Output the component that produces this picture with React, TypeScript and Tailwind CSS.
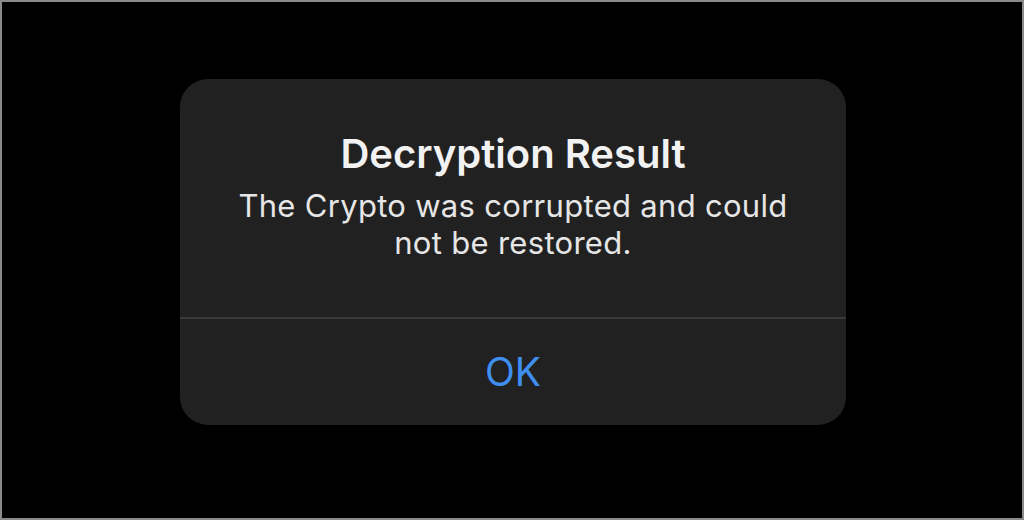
export default function App() {
    return (
        <div
            className="w-[1024px] h-[520px] bg-black border-2 border-[#8a8a8a] flex justify-center items-start pt-[77px] pl-[2px]"
            style={{ fontFamily: 'Inter, "Noto Sans", sans-serif' }}
        >
            <div className="w-[666px] h-[346px] bg-[#212121] rounded-[28px] flex flex-col overflow-hidden">
                <div className="h-[238px] flex flex-col items-center pt-[51px]">
                    <h1 className="text-[40px] leading-[48px] font-semibold text-[#f2f2f2]">
                        Decryption Result
                    </h1>
                    <p className="mt-[9px] text-[31px] leading-[37px] text-[#e6e6e6] text-center w-[580px] tracking-[0.3px]">
                        The Crypto was corrupted and could not be restored.
                    </p>
                </div>
                <div className="h-[2px] bg-[#3a3a3a]" />
                <button className="flex-1 flex items-center justify-center text-[39px] text-[#3f8ff0]">
                    OK
                </button>
            </div>
        </div>
    );
}
